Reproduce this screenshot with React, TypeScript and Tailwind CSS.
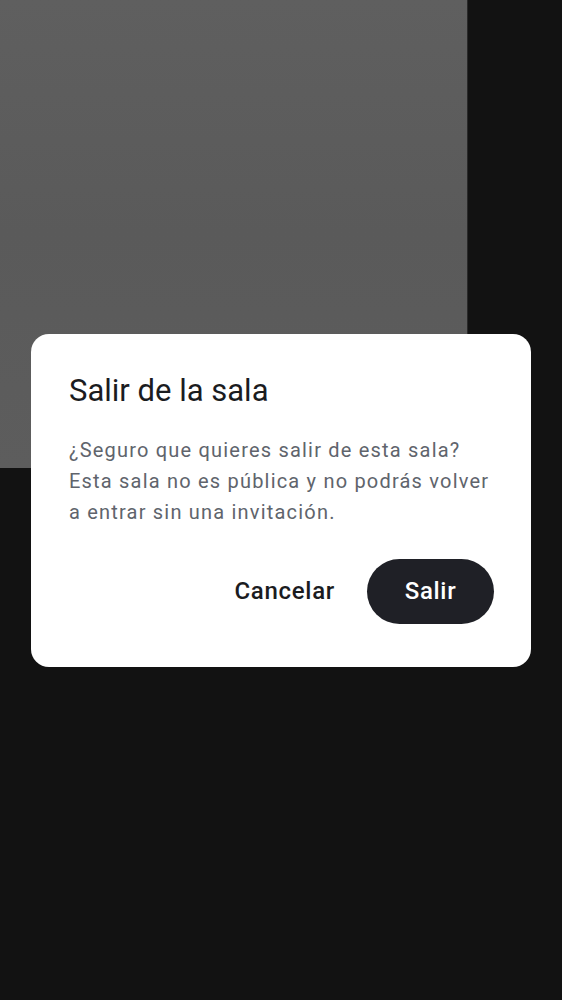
export default function App() {
  return (
    <div className="relative h-[1000px] w-full overflow-hidden bg-[#121212]" style={{ fontFamily: "Roboto, 'Noto Sans', sans-serif" }}>
      <div className="h-[468px] w-[468px] border-r border-[#2a2a2a] bg-gradient-to-b from-[#5f5f5f] via-[#5a5a5a] to-[#5d5d5d]" />
      <div className="fixed inset-0 flex items-center justify-center px-[31px]">
        <div className="w-full rounded-[18px] bg-white pb-[43px] pl-[38px] pr-[37px] pt-[37px]">
          <h2 className="text-[31px] leading-[40px] font-normal text-[#1b1c1f]">Salir de la sala</h2>
          <p className="mt-[24px] text-[20px] leading-[31px] tracking-[1.2px] text-[#60646c]">
            ¿Seguro que quieres salir de esta sala? Esta sala no es pública y no podrás volver a entrar sin una invitación.
          </p>
          <div className="mt-[31px] flex items-center justify-end gap-[8px]">
            <button className="h-[65px] rounded-full px-[24px] text-[24px] font-medium tracking-[0.7px] text-[#1b1c1f]">Cancelar</button>
            <button className="h-[65px] w-[127px] rounded-full bg-[#1f2026] text-[24px] font-medium tracking-[0.7px] text-white">Salir</button>
          </div>
        </div>
      </div>
    </div>
  );
}
